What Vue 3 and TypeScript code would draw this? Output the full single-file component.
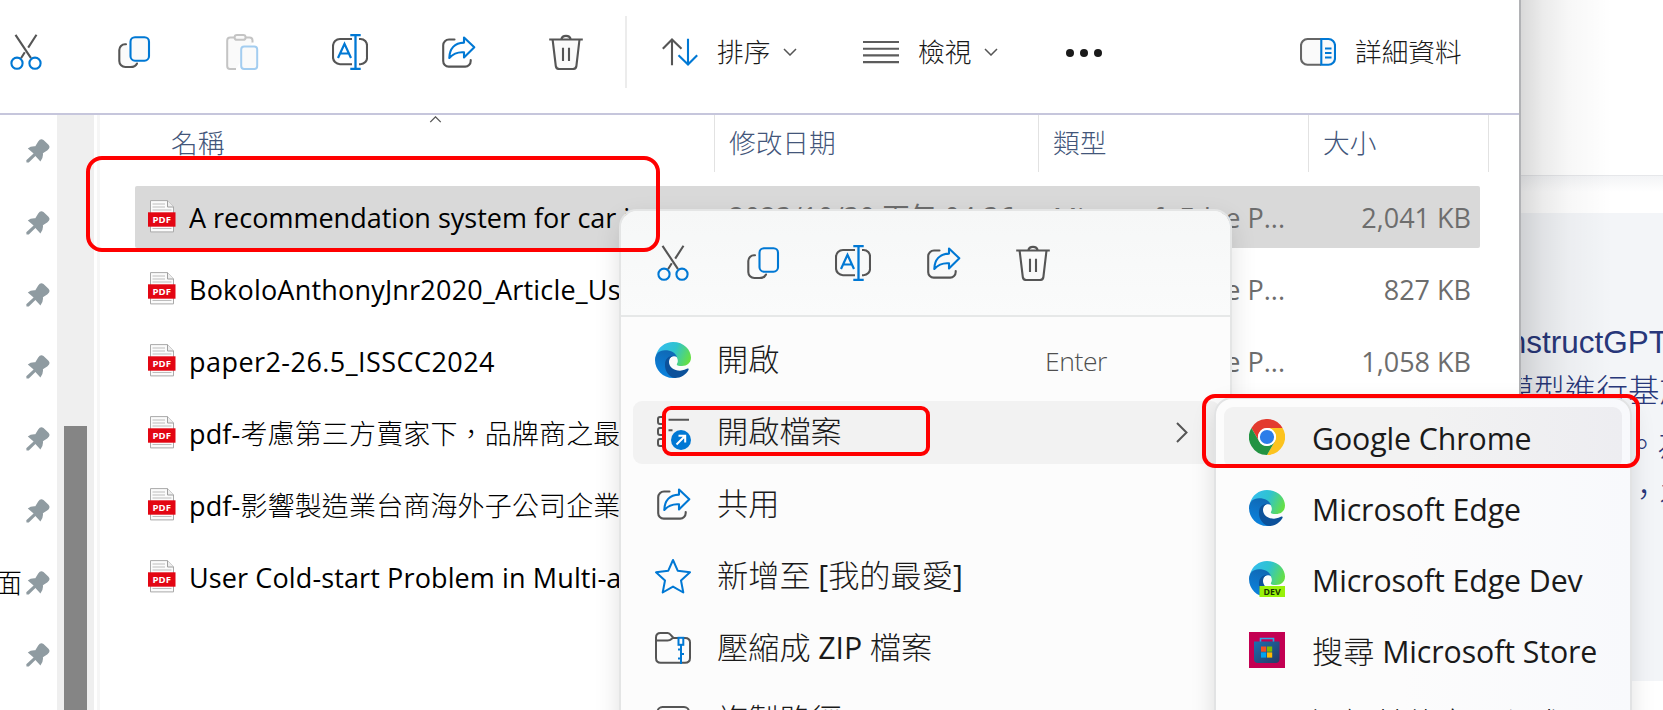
<script setup lang="ts">
interface FileRow {
  name: string
  size: string
  track: number
  selected?: boolean
}
interface MenuItem {
  icon: string
  label: string
  hint?: string
  active?: boolean
  arrow?: boolean
}
interface Run {
  text: string
  han: boolean
}

const tools: string[] = ['cut', 'copy', 'paste', 'rename', 'share', 'trash']
const quick: string[] = ['cut', 'copy', 'rename', 'share', 'trash']
const pins: string[] = ['', '', '', '', '', '', '面', '']

const files: FileRow[] = [
  { name: 'A recommendation system for car insurance', size: '2,041 KB', track: 0, selected: true },
  { name: 'BokoloAnthonyJnr2020_Article_User', size: '827 KB', track: 0.2 },
  { name: 'paper2-26.5_ISSCC2024', size: '1,058 KB', track: 0.45 },
  { name: 'pdf-考慮第三方賣家下，品牌商之最適', size: '', track: 0.15 },
  { name: 'pdf-影響製造業台商海外子公司企業績效', size: '', track: 0.15 },
  { name: 'User Cold-start Problem in Multi-armed', size: '', track: 0.12 },
]

const menu: MenuItem[] = [
  { icon: 'edge', label: '開啟', hint: 'Enter' },
  { icon: 'openwith', label: '開啟檔案', active: true, arrow: true },
  { icon: 'share', label: '共用' },
  { icon: 'star', label: '新增至 [我的最愛]' },
  { icon: 'zip', label: '壓縮成 ZIP 檔案' },
  { icon: 'path', label: '複製路徑' },
]

const apps: MenuItem[] = [
  { icon: 'chrome', label: 'Google Chrome', active: true },
  { icon: 'edge', label: 'Microsoft Edge' },
  { icon: 'edgedev', label: 'Microsoft Edge Dev' },
  { icon: 'store', label: '搜尋 Microsoft Store' },
  { icon: '', label: '選擇其他應用程式' },
]

// Splits a label into Chinese and Latin runs, which are set in different weights.
function runs(label: string): Run[] {
  const parts = label.match(/[\u3000-\u9fff\uff00-\uffef]+|[^\u3000-\u9fff\uff00-\uffef]+/g) ?? []
  return parts.map((text) => ({ text, han: text.charCodeAt(0) >= 0x3000 }))
}
</script>

<template>
  <div class="screen">
    <svg class="defs" width="0" height="0" aria-hidden="true">
      <defs>
        <linearGradient id="gTop" x1="0" y1="0.3" x2="1" y2="0.6">
          <stop offset="0" stop-color="#35bdf0" />
          <stop offset="0.5" stop-color="#2fc3cf" />
          <stop offset="1" stop-color="#66e043" />
        </linearGradient>
        <linearGradient id="gBlue" x1="0.6" y1="0" x2="0.3" y2="1">
          <stop offset="0" stop-color="#1068b4" />
          <stop offset="1" stop-color="#0a84e0" />
        </linearGradient>
        <linearGradient id="gStore" x1="0" y1="0" x2="1" y2="1">
          <stop offset="0" stop-color="#1a6fb0" />
          <stop offset="1" stop-color="#253a63" />
        </linearGradient>
      </defs>
      <symbol id="cut" viewBox="0 0 36 36">
        <g fill="none" stroke-width="2.1">
          <path d="M7.500 .8L23 24.200M28.500 .8L20.200 13.600M16.800 18.200L13 24.200" stroke="#555" />
          <circle cx="9" cy="29.200" r="5.600" stroke="#0078d4" />
          <circle cx="27" cy="29.200" r="5.600" stroke="#0078d4" />
        </g>
      </symbol>
      <symbol id="copy" viewBox="0 0 36 36">
        <g fill="#fafafa" stroke-width="2.100" stroke-linecap="round">
          <path d="M10 10.200H9A5.800 5.800 0 0 0 3.300 16V27A6 6 0 0 0 9.300 33H14.500q5 0 6.500-3.500" stroke="#555" />
          <rect x="14.500" y="3.200" width="18.500" height="23.500" rx="4.500" stroke="#0078d4" />
        </g>
      </symbol>
      <symbol id="paste" viewBox="0 0 36 36">
        <g fill="#fafafa" stroke-width="2">
          <path d="M12 35H6Q3.200 35 3.200 32V6.500Q3.200 3.500 6.200 3.500H25.500Q28.500 3.500 28.500 6.500V8.500" stroke="#c4c4c4" />
          <rect x="10.600" y="1" width="11" height="4.800" rx="2.400" stroke="#c4c4c4" />
          <rect x="17.200" y="12.500" width="16" height="22.500" rx="3" stroke="#a3cdf0" />
        </g>
      </symbol>
      <symbol id="rename" viewBox="0 0 36 36">
        <g fill="none" stroke-width="2.100">
          <path d="M20 5H8A7 7 0 0 0 1 12V23A7 7 0 0 0 8 30.200H20M27 5H28.500A6.500 6.500 0 0 1 35 12V23A6.500 6.500 0 0 1 28.500 30.200H27" stroke="#555" />
          <path d="M23.500 1V35M18.300 1H28.700M18.300 35H28.700" stroke="#0078d4" stroke-width="2.300" />
          <path d="M6 24L12.500 9.800L19 24M8 19.500H17" stroke="#0078d4" stroke-width="2.200" />
        </g>
      </symbol>
      <symbol id="share" viewBox="0 0 36 36">
        <g fill="none" stroke-width="2.100" stroke-linejoin="round" stroke-linecap="round">
          <path d="M14.500 5.500H9A5.800 5.800 0 0 0 3.200 11.300V27A5.500 5.500 0 0 0 8.700 32.600H25A5.500 5.500 0 0 0 30.700 27V26" stroke="#555" />
          <path d="M24 3.500L34.300 13.300L24 23.400V18.400C17.500 17.800 13 20 9.300 24C9.500 15 14.500 9 24 8.600Z" stroke="#0078d4" />
        </g>
      </symbol>
      <symbol id="trash" viewBox="0 0 36 36">
        <g fill="#fafafa" stroke="#555" stroke-width="2.100">
          <path d="M4.600 5.500L7.800 32Q8.200 35 11.200 35H25Q28 35 28.400 32L31.500 5.500" />
          <path d="M1.200 5.500H34.800M13.200 5.500A4.900 4.500 0 0 1 22.800 5.500M15 13.800V27M21 13.800V27" />
        </g>
      </symbol>
      <symbol id="sort" viewBox="0 0 36 36">
        <g fill="none" stroke-width="2.100">
          <path d="M10 31.300V5.500M.8 14.800L10 5.500L19.500 14.800" stroke="#555" />
          <path d="M26 4.700V30.500M16.500 21.200L26 30.500L35.200 21.200" stroke="#0078d4" />
        </g>
      </symbol>
      <symbol id="view" viewBox="0 0 36 36">
        <path d="M0 8H36M0 14.700H36M0 21.400H36M0 28.100H36" stroke="#5c5c5c" stroke-width="2.100" />
      </symbol>
      <symbol id="details" viewBox="0 0 36 36">
        <g fill="#fafafa" stroke-width="2.100">
          <path d="M21 5H7.500A6.500 6.500 0 0 0 1 11.500V24A6.500 6.500 0 0 0 7.500 30.700H21" stroke="#666" />
          <path d="M21.300 5H28.500A6.500 6.500 0 0 1 35 11.500V24A6.500 6.500 0 0 1 28.500 30.700H21.300Z" stroke="#0078d4" />
          <path d="M25 14.500H31.500M25 19H31.500M25 23.500H31.500" stroke="#0078d4" />
        </g>
      </symbol>
      <symbol id="pin" viewBox="0 0 24 24">
        <path d="M.5 23.600L.3 21.300L7.600 14.600L1.800 9.600Q4.500 7 9.300 7.300L12.200 2.500Q14.500-1 17.500 1L22.500 5.800Q25 8.500 21.500 11.300L16.900 14.300Q17.500 18.500 14.400 22.500L9.400 17.100L2.800 23.600Z" fill="#8f9ba1" />
      </symbol>
      <symbol id="pdf" viewBox="0 0 28 33">
        <path d="M2.500 .6H19.500L25.500 7V31.900H2.500Z" fill="#fbfbfb" stroke="#a9a9a9" />
        <path d="M19.500 .6V7H25.500" fill="#eee" stroke="#a0a0a0" />
        <path d="M4.500 4H17M4.500 7H17M4.500 10H23.500M4.500 28.500H23.500" stroke="#bdbdbd" />
        <rect x="0" y="12.300" width="27.500" height="14.400" fill="#e30613" />
        <text x="13.800" y="23" font-family="Open Sans, sans-serif" font-weight="700" font-size="9.600" text-anchor="middle" fill="#fff">PDF</text>
      </symbol>
      <symbol id="edge" viewBox="0 0 36 36">
        <path d="M.8 14C3 5 10 0 18 0C29 0 36 8 36 15.500C36 21 32 24 27 24C24 24 21.800 23.500 21.800 22.500C21.800 21.500 23.500 20.500 22.500 17C21 12 16 9 10.500 9C5 9 2 12 .8 14Z" fill="url(#gTop)" />
        <path d="M0 18C0 12 4 8.300 10 8.300C16 8.300 20.500 11 22 15C17 12.500 11 17 11 23C11 29 15 34.500 22 35.500C21 36 19 36 18 36C8 36 0 28 0 18Z" fill="url(#gBlue)" />
        <path d="M10 22C10 17 14 14 18 13.800C15.500 15 14 17.500 14 20C14 25 19 28.700 25 28.700C28.500 28.700 31 27.200 32.500 26.600C33.500 26.400 34 27 33.500 28C31 32.500 26 36 20 36C14 35 9.500 29 10 22Z" fill="#0c519a" />
      </symbol>
      <symbol id="edgedev" viewBox="0 0 36 36">
        <use href="#edge" width="36" height="36" />
        <path d="M10.500 25H36V36H10.500Z" fill="#98f10a" />
        <text x="23.200" y="33.800" font-family="Open Sans, sans-serif" font-weight="700" font-size="8.800" text-anchor="middle" fill="#163300">DEV</text>
      </symbol>
      <symbol id="chrome" viewBox="0 0 36 36">
        <path d="M18 9H33.600A18 18 0 0 0 2.400 9L10.200 22.500A9 9 0 0 1 18 9Z" fill="#e33b2e" />
        <path d="M25.800 22.500L18 36A18 18 0 0 0 33.600 9H18A9 9 0 0 1 25.800 22.500Z" fill="#fcc31e" />
        <path d="M10.200 22.500L2.400 9A18 18 0 0 0 18 36L25.800 22.500A9 9 0 0 1 10.200 22.500Z" fill="#229342" />
        <circle cx="18" cy="18" r="9" fill="#fff" />
        <circle cx="18" cy="18" r="7.100" fill="#2b7de9" />
      </symbol>
      <symbol id="store" viewBox="0 0 36 36">
        <rect width="36" height="36" fill="#c30052" />
        <path d="M11.500 10V6.500H24.500V10" fill="none" stroke="#29a8e8" stroke-width="1.600" />
        <path d="M5 9.500H30.500V27Q30.500 31 26.500 31H9Q5 31 5 27Z" fill="url(#gStore)" />
        <rect x="12" y="14.500" width="5.200" height="5.200" fill="#f25022" />
        <rect x="18" y="14.500" width="5.200" height="5.200" fill="#7fba00" />
        <rect x="12" y="20.400" width="5.200" height="5.200" fill="#00a4ef" />
        <rect x="18" y="20.400" width="5.200" height="5.200" fill="#ffb900" />
      </symbol>
      <symbol id="openwith" viewBox="0 0 36 36">
        <g fill="none" stroke="#555" stroke-width="2">
          <rect x="3" y="3" width="6.500" height="7" rx="2" />
          <rect x="3" y="14" width="6.500" height="7" rx="2" />
          <rect x="3" y="25" width="6.500" height="7" rx="2" />
          <path d="M13.500 5.700H34M13.500 16.300H17.500" />
        </g>
        <circle cx="26" cy="26" r="10" fill="#0078d4" />
        <path d="M21.500 30.500L30 22M23.500 21.800H30.200V28.500" fill="none" stroke="#fff" stroke-width="2" />
      </symbol>
      <symbol id="star" viewBox="0 0 36 36">
        <path d="M18 2L22.700 12.700L35 14.300L26 22.500L28.300 34.500L18 28.600L7.700 34.500L10 22.500L1 14.300L13.300 12.700Z" fill="none" stroke="#0078d4" stroke-width="2" stroke-linejoin="round" />
      </symbol>
      <symbol id="zip" viewBox="0 0 36 36">
        <g fill="none" stroke="#555" stroke-width="2">
          <path d="M23.500 8H18.500L15 4.200Q14 3 12.500 3H5.500Q1 3 1 7.500V28Q1 32.800 5.800 32.800H30Q35 32.800 35 28V12.500Q35 8 30 8H28.500" />
          <path d="M1 10.500H12.500Q15 10.500 16.500 9L18 7.800" />
        </g>
        <g fill="none" stroke="#0078d4" stroke-width="2">
          <rect x="23.500" y="7.800" width="4.800" height="7" />
          <path d="M26 15V34M23 19.500H26M26 24H29M23 28.500H26" />
        </g>
      </symbol>
      <symbol id="path" viewBox="0 0 36 36">
        <rect x="2.500" y="5" width="31.500" height="26" rx="5" fill="none" stroke="#555" stroke-width="2" />
      </symbol>
      <symbol id="chev" viewBox="0 0 14 8">
        <path d="M1 1L7 7L13 1" fill="none" stroke="#555" stroke-width="1.500" />
      </symbol>
    </svg>

    <!-- page behind the window -->
    <aside class="page">
      <div class="page-top"></div>
      <div class="page-gap"></div>
      <div class="page-body">
        <p class="line en">InstructGPT</p>
        <p class="line">模型進行基於</p>
        <p class="line third">。為</p>
        <p class="line fourth">，為</p>
      </div>
      <div class="page-shade"></div>
    </aside>

    <main class="window">
      <header class="toolbar">
        <div class="tools">
          <svg v-for="t in tools" :key="t" class="ic"><use :href="'#' + t" /></svg>
        </div>
        <div class="rule"></div>
        <div class="cmd sort">
          <svg class="ic"><use href="#sort" /></svg><span>排序</span><svg class="chev"><use href="#chev" /></svg>
        </div>
        <div class="cmd view">
          <svg class="ic"><use href="#view" /></svg><span>檢視</span><svg class="chev"><use href="#chev" /></svg>
        </div>
        <div class="dots"><i></i><i></i><i></i></div>
        <div class="cmd details">
          <svg class="ic"><use href="#details" /></svg><span>詳細資料</span>
        </div>
      </header>

      <div class="content">
        <nav class="side">
          <div v-for="(p, i) in pins" :key="i" class="side-row">
            <span>{{ p }}</span><svg class="pin"><use href="#pin" /></svg>
          </div>
        </nav>
        <div class="scroll"><div class="thumb"></div></div>
        <div class="split"></div>
        <section class="list">
          <div class="heads">
            <div class="h name">名稱<svg class="caret"><use href="#chev" /></svg></div>
            <div class="h date">修改日期</div>
            <div class="h type">類型</div>
            <div class="h size">大小</div>
          </div>
          <div class="rows">
            <div v-for="f in files" :key="f.name" class="row" :class="{ selected: f.selected }">
              <svg class="pdf"><use href="#pdf" /></svg>
              <span class="fname" :style="{ letterSpacing: f.track + 'px' }"><span v-for="r in runs(f.name)" :key="r.text" :class="{ han: r.han }">{{ r.text }}</span></span>
              <template v-if="f.size">
                <span class="fdate">2023/10/30 下午 04:36</span>
                <span class="ftype">Microsoft Edge P...</span>
                <span class="fsize">{{ f.size }}</span>
              </template>
            </div>
          </div>
        </section>
      </div>
    </main>

    <div class="menu">
      <div class="quick">
        <svg v-for="q in quick" :key="q" class="ic"><use :href="'#' + q" /></svg>
      </div>
      <div class="items">
        <div v-for="m in menu" :key="m.label" class="item" :class="{ active: m.active }">
          <svg class="ic"><use :href="'#' + m.icon" /></svg>
          <span class="label"><span v-for="r in runs(m.label)" :key="r.text" :class="r.han ? 'han' : 'latin'">{{ r.text }}</span></span>
          <span v-if="m.hint" class="hint">{{ m.hint }}</span>
          <svg v-if="m.arrow" class="arrow" viewBox="0 0 12 21"><path d="M1 1L10.500 10.500L1 20" fill="none" stroke="#555" stroke-width="2" /></svg>
        </div>
      </div>
    </div>

    <div class="submenu">
      <div v-for="a in apps" :key="a.label" class="app" :class="{ active: a.active }">
        <svg class="ic"><use v-if="a.icon" :href="'#' + a.icon" /></svg>
        <span class="app-name"><span v-for="r in runs(a.label)" :key="r.text" :class="r.han ? 'han' : 'latin'">{{ r.text }}</span></span>
      </div>
    </div>

    <div class="mark one"></div>
    <div class="mark two"></div>
    <div class="mark three"></div>
  </div>
</template>

<style>
body {
  margin: 0;
  overflow: hidden;
}
</style>

<style scoped>
.screen {
  position: relative;
  box-sizing: border-box;
  width: 1663px;
  height: 710px;
  overflow: hidden;
  background: #fff;
  font-family: 'Open Sans', 'Noto Sans CJK TC', sans-serif;
  font-size: 27px;
  line-height: 38px;
  color: #000;
  white-space: pre;
}
.screen *,
.screen *::before {
  box-sizing: border-box;
}
.defs {
  position: absolute;
}
.ic {
  display: block;
  flex: none;
  width: 36px;
  height: 36px;
}
.han {
  font-weight: 300;
}

.page {
  position: absolute;
  inset: 0 0 0 1521px;
  overflow: hidden;
}
.page-top {
  height: 176px;
  border-bottom: 1px solid #e6e7ea;
  background: #fff;
}
.page-gap {
  height: 37px;
  background: linear-gradient(#f3f4f6, #fff 16px);
}
.page-body {
  height: 468px;
  padding-top: 105px;
  background: #f3f5f8;
  color: #28377a;
}
.line {
  height: 48px;
  margin: 0 0 0 -19px;
  font: 300 31.500px/48px 'Liberation Sans', 'Noto Sans CJK TC', sans-serif;
}
.line.en {
  margin: 0 0 1px -21px;
}
.line.third {
  margin: 6px 0 0 105px;
}
.line.fourth {
  margin: 2px 0 0 107px;
}
.page-shade {
  position: absolute;
  inset: 0;
  background: linear-gradient(90deg, rgba(0, 0, 0, 0.15), rgba(0, 0, 0, 0.08) 22px, rgba(0, 0, 0, 0.03) 48px, transparent 92px);
}

.window {
  position: relative;
  display: flex;
  flex-direction: column;
  width: 1521px;
  height: 710px;
  border-right: 2px solid #b1b2b5;
  background: #fff;
}
.toolbar {
  display: flex;
  align-items: center;
  height: 115px;
  padding: 0 0 9px 8px;
  border-bottom: 2px solid #c6c6dc;
  font-size: 26.700px;
  font-weight: 300;
  color: #1a1a1a;
}
.tools {
  display: flex;
  gap: 72px;
}
.rule {
  width: 2px;
  height: 72px;
  margin: 0 35px 0 41px;
  background: #ececec;
}
.cmd {
  display: flex;
  align-items: center;
}
.cmd span {
  margin-left: 19px;
}
.chev {
  width: 14px;
  height: 8px;
  margin-left: 13px;
}
.sort {
  width: 201px;
}
.view {
  width: 203px;
}
.dots {
  display: flex;
  gap: 6px;
  width: 234px;
  margin-top: 1px;
}
.dots i {
  width: 8px;
  height: 8px;
  border-radius: 50%;
  background: #1a1a1a;
}

.content {
  display: flex;
  flex: 1;
  min-height: 0;
}
.side {
  width: 57px;
  overflow: hidden;
}
.side-row {
  display: flex;
  align-items: center;
  justify-content: flex-end;
  height: 72px;
  padding: 0 7px 0 0;
  font-weight: 300;
}
.side-row span {
  margin: 0 4px 1px 0;
}
.pin {
  flex: none;
  width: 24px;
  height: 24px;
}
.scroll {
  width: 37px;
  padding: 311px 7px 0;
  background: #efefef;
}
.thumb {
  height: 100%;
  background: #858585;
}
.split {
  width: 3px;
  margin: 0 0 0 3px;
  background: #f6f6f6;
}
.list {
  flex: 1;
  display: flex;
  flex-direction: column;
}
.heads {
  display: flex;
  height: 57px;
  font-size: 26.700px;
  font-weight: 300;
  line-height: 55px;
  color: #43567a;
}
.h {
  position: relative;
  border-right: 1px solid #e2e2e2;
}
.name {
  width: 615px;
  padding-left: 71px;
}
.date {
  width: 324px;
  padding-left: 14px;
}
.type {
  width: 270px;
  padding-left: 14px;
}
.size {
  width: 180px;
  padding-left: 14px;
}
.caret {
  position: absolute;
  left: 329px;
  top: 1px;
  width: 13px;
  height: 7px;
  transform: rotate(180deg);
}
.rows {
  display: flex;
  flex-direction: column;
  gap: 10px;
  padding: 14px 0 0 35px;
}
.row {
  display: grid;
  grid-template-columns: 28px 13px 540px 324px 250px 168px;
  align-items: center;
  width: 1345px;
  height: 62px;
  padding-left: 13px;
  border-radius: 2px;
  color: #6d6d6d;
}
.row > span {
  margin-top: 2px;
}
.row.selected {
  background: #d9d9d9;
}
.pdf {
  width: 28px;
  height: 33px;
  margin-bottom: 2px;
}
.fname {
  grid-column: 3;
  overflow: hidden;
  color: #000;
}
.row > .fdate {
  margin-top: 0;
  letter-spacing: 0.300px;
}
.fsize {
  text-align: right;
}

.menu {
  position: absolute;
  left: 619px;
  top: 209px;
  width: 613px;
  height: 560px;
  border: 2px solid #e4e5e5;
  border-radius: 18px;
  background: #fcfcfc;
  box-shadow: 0 10px 26px rgba(0, 0, 0, 0.12);
  background-clip: padding-box;
}
.quick {
  display: flex;
  align-items: center;
  gap: 54px;
  height: 106px;
  padding: 0 0 0 34px;
  border-radius: 16px 16px 0 0;
  border-bottom: 2px solid #e6e8e8;
  background: linear-gradient(#f6f7f7, #fafbfb);
}
.items {
  display: flex;
  flex-direction: column;
  gap: 9px;
  padding: 12px 10px 0 12px;
}
.item {
  display: flex;
  align-items: center;
  height: 63px;
  padding-left: 22px;
  border-radius: 9px;
  font-size: 31.200px;
  color: #1a1a1a;
}
.item .ic {
  margin-bottom: 2px;
}
.active {
  background: #f2f2f2;
}
.label {
  width: 328px;
  margin: 0 0 3px 26px;
}
.latin {
  font-size: 30.300px;
  letter-spacing: -0.100px;
}
.hint {
  font-size: 26.500px;
  font-weight: 300;
  color: #4f4f4f;
  letter-spacing: -0.400px;
}
.arrow {
  width: 12px;
  height: 21px;
  margin-left: 131px;
}

.submenu {
  position: absolute;
  left: 1214px;
  top: 397px;
  width: 418px;
  height: 380px;
  display: flex;
  flex-direction: column;
  gap: 10px;
  padding: 8px;
  border: 2px solid #e2e3e4;
  border-radius: 18px;
  background: linear-gradient(90deg, #fcfcfc 45%, #f8f9fc);
  box-shadow: 0 8px 24px rgba(0, 0, 0, 0.12);
}
.app {
  display: flex;
  flex: none;
  align-items: center;
  gap: 27px;
  height: 61px;
  padding-left: 25px;
  border-radius: 9px;
  font-size: 31.200px;
  color: #1a1a1a;
}
.app .ic {
  margin-bottom: 2px;
}
.app-name {
  margin-top: 2px;
}
.app.active {
  background: linear-gradient(90deg, #f2f2f2 50%, #ededf1);
}

.mark {
  position: absolute;
  border: 4px solid #f00;
}
.one {
  left: 86px;
  top: 156px;
  width: 574px;
  height: 96px;
  border-radius: 16px;
}
.two {
  left: 662px;
  top: 406px;
  width: 268px;
  height: 50px;
  border-radius: 9px;
}
.three {
  left: 1202px;
  top: 394px;
  width: 438px;
  height: 74px;
  border-radius: 13px;
}
</style>
